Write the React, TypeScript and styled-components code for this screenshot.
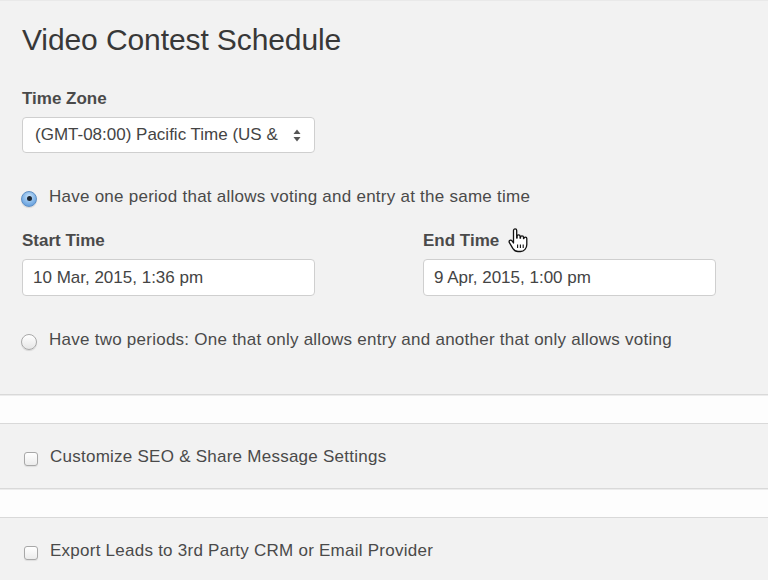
import React from "react";
import styled, { createGlobalStyle } from "styled-components";

const Global = createGlobalStyle`
  html, body { margin: 0; padding: 0; background: #fdfdfd; }
  body { font-family: "Liberation Sans", Arial, sans-serif; color: #4a4a4a; }
  * { box-sizing: border-box; }
`;

const Page = styled.div`
  position: relative;
  width: 768px;
  height: 580px;
  overflow: hidden;
  display: flex;
  flex-direction: column;
  gap: 28px;
`;

const Panel = styled.section<{ $first?: boolean }>`
  background: #f2f2f2;
  border-top: 1px solid ${(p) => (p.$first ? "#e9e9e9" : "#d9d9d9")};
  border-bottom: 1px solid #d9d9d9;
  box-shadow: 0 1px 0 #ececec;
`;

const SchedulePanel = styled(Panel)`
  padding: 21px 22px 44px;
  display: flex;
  flex-direction: column;
`;

const OptionPanel = styled(Panel)`
  padding: 23px 24px 21px;
`;

const Title = styled.h1`
  margin: 0;
  font-family: "Liberation Sans", Arial, sans-serif;
  font-weight: 400;
  font-size: 30px;
  line-height: 36px;
  color: #383838;
  letter-spacing: -0.1px;
`;

const Label = styled.div<{ $top: number }>`
  margin-top: ${(p) => p.$top}px;
  font-size: 17px;
  font-weight: 700;
  line-height: 20px;
  color: #4a4a4a;
`;

const Field = styled.div`
  margin-top: 8px;
  width: 293px;
  height: 37px;
  background: #fff;
  border: 1px solid #cfcfcf;
  border-radius: 4px;
  display: flex;
  align-items: center;
  padding: 0 10px;
  font-size: 17px;
  color: #444;
  justify-content: space-between;
`;

const SelectField = styled(Field)`
  height: 36px;
  padding: 0 12px;
`;

const Arrows = styled.svg`
  width: 8px;
  height: 13px;
  margin-right: 1px;
`;

const ChoiceRow = styled.label<{ $top: number }>`
  margin-top: ${(p) => p.$top}px;
  display: flex;
  align-items: center;
  gap: 12px;
  font-size: 17px;
  line-height: 20px;
  color: #4a4a4a;
  letter-spacing: 0.25px;
`;

const Radio = styled.span<{ $on?: boolean }>`
  width: 16px;
  height: 16px;
  border-radius: 50%;
  flex: none;
  margin-left: -1px;
  margin-top: 3px;
  display: flex;
  align-items: center;
  justify-content: center;
  border: 1px solid ${(p) => (p.$on ? "#5f8fc4" : "#a9a9a9")};
  background: ${(p) =>
    p.$on
      ? "radial-gradient(circle at 50% 35%, #cfe6fb 0%, #8dbcea 45%, #4f8fd6 100%)"
      : "linear-gradient(#ffffff, #e6e6e6)"};
  box-shadow: 0 1px 1px rgba(0, 0, 0, 0.12);
  &::after {
    content: "";
    display: ${(p) => (p.$on ? "block" : "none")};
    width: 5px;
    height: 5px;
    border-radius: 50%;
    background: #1d2733;
  }
`;

const Columns = styled.div`
  display: grid;
  grid-template-columns: 293px 293px;
  column-gap: 108px;
`;

const Column = styled.div`
  display: flex;
  flex-direction: column;
`;

const CheckRow = styled.label`
  display: flex;
  align-items: center;
  gap: 12px;
  font-size: 17px;
  line-height: 20px;
  color: #4a4a4a;
  letter-spacing: 0.25px;
`;

const Box = styled.span`
  width: 14px;
  height: 14px;
  flex: none;
  margin-top: 3px;
  border: 1px solid #a8a8a8;
  border-radius: 3px;
  background: linear-gradient(#ffffff, #ececec);
  box-shadow: 0 1px 1px rgba(0, 0, 0, 0.08);
`;

const Cursor = styled.svg`
  position: absolute;
  left: 507px;
  top: 228px;
  width: 23px;
  height: 25px;
`;

export default function App() {
  return (
    <>
      <Global />
      <Page>
        <SchedulePanel $first>
          <Title>Video Contest Schedule</Title>
          <Label $top={31}>Time Zone</Label>
          <SelectField>
            <span>(GMT-08:00) Pacific Time (US &amp;</span>
            <Arrows viewBox="0 0 8 13">
              <path d="M4 0.5 L7.5 5 H0.5 Z" fill="#555" />
              <path d="M4 12.5 L7.5 8 H0.5 Z" fill="#555" />
            </Arrows>
          </SelectField>
          <ChoiceRow $top={34}>
            <Radio $on />
            <span>Have one period that allows voting and entry at the same time</span>
          </ChoiceRow>
          <Columns>
            <Column>
              <Label $top={24}>Start Time</Label>
              <Field>10 Mar, 2015, 1:36 pm</Field>
            </Column>
            <Column>
              <Label $top={24}>End Time</Label>
              <Field>9 Apr, 2015, 1:00 pm</Field>
            </Column>
          </Columns>
          <ChoiceRow $top={34}>
            <Radio />
            <span>Have two periods: One that only allows entry and another that only allows voting</span>
          </ChoiceRow>
        </SchedulePanel>
        <OptionPanel>
          <CheckRow>
            <Box />
            <span>Customize SEO &amp; Share Message Settings</span>
          </CheckRow>
        </OptionPanel>
        <OptionPanel>
          <CheckRow>
            <Box />
            <span>Export Leads to 3rd Party CRM or Email Provider</span>
          </CheckRow>
        </OptionPanel>
        <Cursor viewBox="0 0 23 25">
          <path
            d="M6.5 2.6c0-1 .7-1.7 1.6-1.7s1.6.7 1.6 1.7V10h.4V8.4c0-.9.7-1.5 1.5-1.5s1.5.6 1.5 1.5V10.2h.4V9.3c0-.9.7-1.5 1.5-1.5s1.5.6 1.5 1.5v1.3h.4c0-.9.7-1.4 1.5-1.4s1.4.6 1.4 1.4V16.5c0 3.8-2.6 7-6.3 7H11c-2.4 0-4-1.3-5.2-3.2L2.4 14.6c-.5-.8-.3-1.8.4-2.2.8-.5 1.7-.3 2.2.4l1.5 2.2V2.6z"
            fill="#fff"
            stroke="#111"
            strokeWidth="1.3"
            strokeLinejoin="round"
          />
          <path d="M10.6 16.5v3.6M13.4 16.5v3.6M16.2 16.5v3.6" stroke="#111" strokeWidth="1.1" />
        </Cursor>
      </Page>
    </>
  );
}
